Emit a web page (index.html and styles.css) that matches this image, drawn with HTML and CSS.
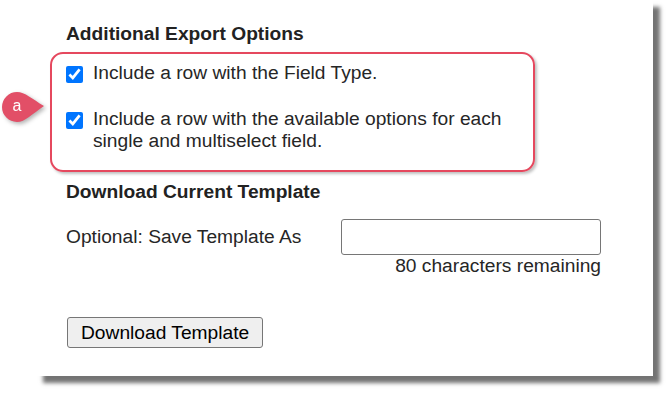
FILE: index.html
```html
<!DOCTYPE html>
<html>
  <head>
    <meta charset="utf-8" />
    <title>Export Options</title>
    <link rel="stylesheet" href="styles.css">
  </head>

  <body>
    <div class="panel">
      <h2 class="title">Additional Export Options</h2>

      <!-- 강조 박스 -->
      <div class="callout">
        <svg class="badge" width="50" height="36" viewBox="0 0 50 36">
          <path d="M17 3 A15 15 0 1 0 17 33 C25 33 32 25 44 17 C32 10 25 3 17 3 Z" fill="#e24f67" />
          <text x="17" y="22" text-anchor="middle">a</text>
        </svg>
        <label class="opt">
          <input type="checkbox" checked />
          <span>Include a row with the Field Type.</span>
        </label>
        <label class="opt opt2">
          <input type="checkbox" checked />
          <span>Include a row with the available options for each single and multiselect field.</span>
        </label>
      </div>

      <h2 class="title title2">Download Current Template</h2>

      <div class="save">
        <div class="save-row">
          <span>Optional: Save Template As</span>
          <input type="text" class="name" />
        </div>
        <div class="count">80 characters remaining</div>
      </div>

      <button class="btn">Download Template</button>
    </div>
  </body>
</html>
```

FILE: styles.css
```css
html,
body {
  height: 393px;
}

body {
  margin: 0;
  background: #fff;
  font-family: "Liberation Sans", Arial, sans-serif;
  font-size: 19.2px;
  line-height: 22px;
  color: #262626;
  overflow: hidden;
}

/* 패널 + 그림자 */
.panel {
  position: relative;
  box-sizing: border-box;
  width: 617px;
  height: 376px;
  margin-left: 36px;
  padding-left: 30px;
  background: #fff;
  box-shadow: 7px 7px 4px rgba(0, 0, 0, 0.55);
}

.title {
  margin: 0;
  padding-top: 23px;
  font-size: 19.2px;
  line-height: 22px;
  font-weight: bold;
  color: #222;
}

.title2 {
  padding-top: 9px;
}

/* 빨간 강조 박스 */
.callout {
  box-sizing: border-box;
  width: 485px;
  margin: 7px 0 0 -16px;
  padding: 8px 12px 18px 14px;
  border: 2px solid #e5485e;
  border-radius: 13px;
  box-shadow: 2px 2px 3px rgba(0, 0, 0, 0.25);
}

.badge {
  position: absolute;
  left: -36px;
  top: 89px;
  filter: drop-shadow(2px 2px 2px rgba(0, 0, 0, 0.3));
}

.badge text {
  fill: #fff;
  font-family: "Liberation Sans", Arial, sans-serif;
  font-size: 16px;
}

.opt {
  display: flex;
  align-items: flex-start;
  gap: 10px;
}

.opt2 {
  margin-top: 24px;
}

.opt input {
  flex: none;
  width: 17px;
  height: 17px;
  margin: 4px 0 0 0;
  accent-color: #0075ff;
}

.save {
  width: 535px;
  margin-top: 16px;
}

.save-row {
  display: flex;
  align-items: center;
  justify-content: space-between;
}

.name {
  box-sizing: border-box;
  width: 260px;
  height: 36px;
  margin: 0;
  padding: 0;
  border: 1px solid #767676;
  border-radius: 3px;
}

.count {
  text-align: right;
}

.btn {
  margin: 40px 0 0 1px;
  padding: 0 13px;
  height: 31px;
  font-family: "Liberation Sans", Arial, sans-serif;
  font-size: 19.2px;
  color: #000;
  background: #efefef;
  border: 1px solid #767676;
  border-radius: 3px;
}
```
